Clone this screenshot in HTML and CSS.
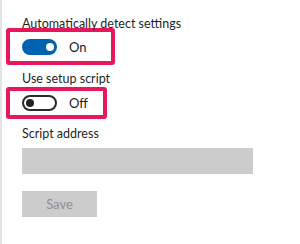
FILE: index.html
```html
<!DOCTYPE html>
<html lang="en">

<head>
  <meta charset="UTF-8">
  <meta name="viewport" content="width=device-width, initial-scale=1">
  <title>Proxy settings</title>
  <link rel="stylesheet" href="styles.css">
</head>

<body>

  <div class="panel">
    <div class="label">Automatically detect settings</div>
    <div class="highlight wide">
      <span class="toggle on"><span class="knob"></span></span>
      <span class="state">On</span>
    </div>

    <div class="label gap">Use setup script</div>
    <div class="highlight narrow">
      <span class="toggle off"><span class="knob"></span></span>
      <span class="state">Off</span>
    </div>

    <div class="label gap-lg">Script address</div>
    <input type="text" class="address" disabled>

    <button class="save" disabled>Save</button>
  </div>

</body>

</html>
```

FILE: styles.css
```css
body {
  font-family: 'Lato', 'Open Sans', sans-serif;
  margin: 0;
  background: white;
  color: #222;
}

.panel {
  height: 244px;
  box-sizing: border-box;
  border-left: 2px solid #e4e4e4;
  padding: 17px 0 0 20px;
}

.label {
  font-size: 12.5px;
  line-height: 14px;
  color: #1f1f1f;
}

.label.gap {
  margin-top: 7px;
}

.label.gap-lg {
  margin-top: 8px;
}

.highlight {
  display: flex;
  align-items: center;
  box-sizing: border-box;
  margin-left: -16px;
  padding-left: 12px;
  border: 4px solid #e8175d;
  border-radius: 3px;
}

.highlight.wide {
  width: 109px;
  height: 37px;
  margin-top: -3px;
}

.highlight.narrow {
  width: 101px;
  height: 32px;
  margin-top: 1px;
}

.toggle {
  display: flex;
  align-items: center;
  box-sizing: border-box;
  width: 35px;
  height: 16px;
  border-radius: 8px;
  padding: 0 3px;
}

.toggle .knob {
  width: 8px;
  height: 8px;
  border-radius: 50%;
}

.toggle.on {
  background-color: #0063b1;
  justify-content: flex-end;
}

.toggle.on .knob {
  background: white;
}

.toggle.off {
  border: 2px solid #2b2b2b;
  padding: 0 2px;
}

.toggle.off .knob {
  background: #222;
}

.state {
  margin-left: 12px;
  font-size: 13px;
}

.address {
  display: block;
  width: 231px;
  height: 26px;
  margin-top: 7px;
  box-sizing: border-box;
  border: none;
  background-color: #cccccc;
}

.save {
  display: block;
  width: 75px;
  height: 26px;
  margin-top: 17px;
  border: none;
  background-color: #cccccc;
  color: #8f8f8f;
  font-family: 'Lato', sans-serif;
  font-size: 13px;
  padding: 0;
}
```
